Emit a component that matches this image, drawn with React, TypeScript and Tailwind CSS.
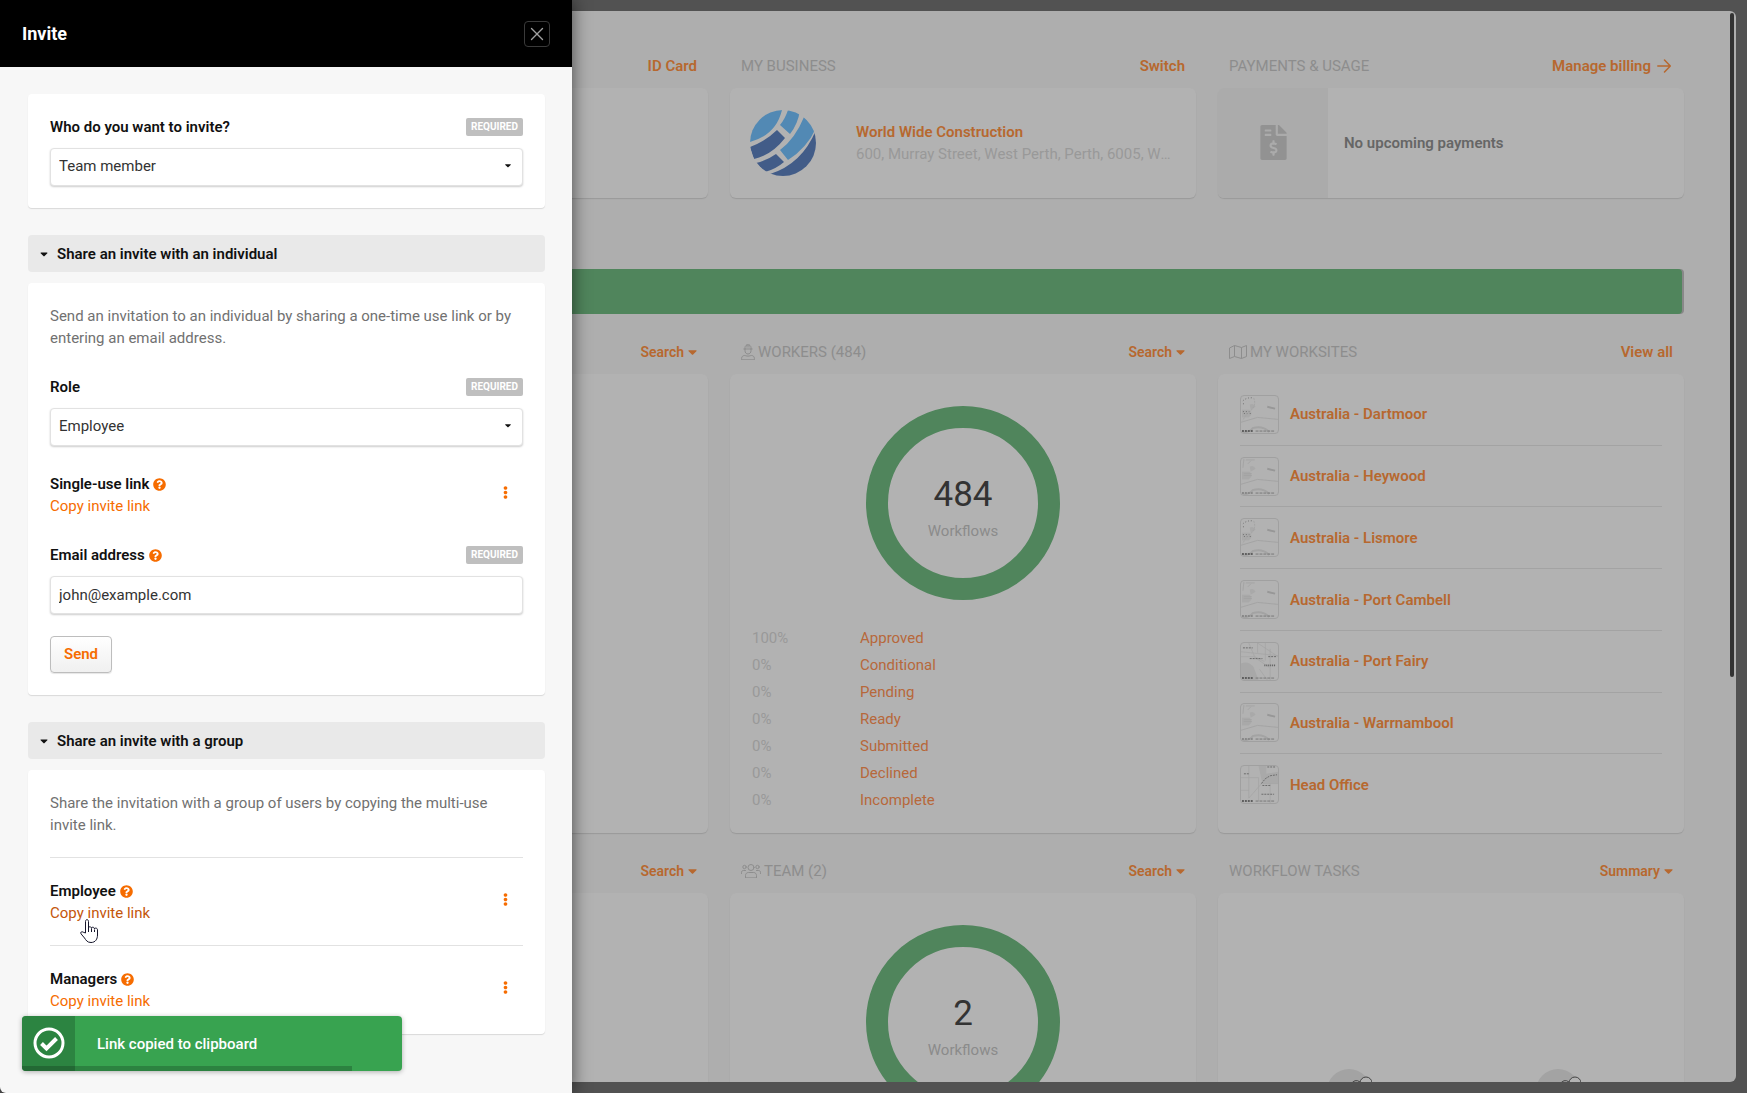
import type { ReactNode } from "react";
import { FaCaretDown, FaEllipsisV, FaFileInvoiceDollar, FaQuestionCircle } from "react-icons/fa";
import { X } from "lucide-react";
import clsx from "clsx";

type SectionProps = {
  icon?: ReactNode;
  title?: string;
  action: ReactNode;
  children?: ReactNode;
};

type FieldProps = {
  id: string;
  label: string;
  help?: boolean;
  children: ReactNode;
};

type InviteRowProps = {
  label: string;
  hovered?: boolean;
};

type MapKind = "town" | "coast" | "city" | "office";

const statuses = [
  ["100%", "Approved"],
  ["0%", "Conditional"],
  ["0%", "Pending"],
  ["0%", "Ready"],
  ["0%", "Submitted"],
  ["0%", "Declined"],
  ["0%", "Incomplete"],
];

const worksites: { name: string; map: MapKind }[] = [
  { name: "Australia - Dartmoor", map: "town" },
  { name: "Australia - Heywood", map: "coast" },
  { name: "Australia - Lismore", map: "town" },
  { name: "Australia - Port Cambell", map: "coast" },
  { name: "Australia - Port Fairy", map: "city" },
  { name: "Australia - Warrnambool", map: "coast" },
  { name: "Head Office", map: "office" },
];

// Icons

function WorkerIcon() {
  return (
    <svg viewBox="0 0 14 16" className="h-4 w-[14px]" fill="none" stroke="currentColor" strokeLinecap="round" strokeLinejoin="round">
      <path d="M2.800 5h8.400M4 5V3.600C4 2 5.300.8 7 .8s3 1.200 3 2.800V5M6 .9v2.300M8 .9v2.300" />
      <path d="M4 5.200v1.600c0 1.800 1.300 3.200 3 3.200s3-1.400 3-3.200V5.200" />
      <path d="M.6 15.400v-1c0-1.700 1.300-2.900 3-2.900.8 0 1.700.6 3.400.6s2.600-.6 3.400-.6c1.700 0 3 1.200 3 2.900v1z" />
    </svg>
  );
}

function TeamIcon() {
  return (
    <svg viewBox="0 0 20 14" className="h-[14px] w-5" fill="none" stroke="currentColor" strokeLinecap="round" strokeLinejoin="round">
      <circle cx="10" cy="3.500" r="3" />
      <circle cx="3.500" cy="3" r="1.700" />
      <circle cx="16.500" cy="3" r="1.700" />
      <path d="M4.500 13.500v-2c0-1.700 1.200-3 2.800-3h5.400c1.600 0 2.800 1.300 2.800 3v2zM.5 9.500V8.300c0-1 .8-1.800 1.800-1.800h2.200M19.500 9.500V8.300c0-1-.8-1.800-1.800-1.800h-2.200" />
    </svg>
  );
}

function WorksitesIcon() {
  return (
    <svg viewBox="0 0 18 14" className="h-[14px] w-[18px]" fill="none" stroke="currentColor" strokeLinejoin="round">
      <path d="M.5 3v10.500l5-2 7 2 5-2V.5l-5 2-7-2zM5.500.5v11M12.500 2.500v11" />
    </svg>
  );
}

function ArrowIcon() {
  return (
    <svg viewBox="0 0 14 14" className="mr-0.5 size-[14px]" fill="none" stroke="currentColor" strokeWidth="1.500" strokeLinecap="round" strokeLinejoin="round">
      <path d="M.8 7h12.400M7.500 1l5.800 6-5.800 6" />
    </svg>
  );
}

function GlobeLogo() {
  return (
    <svg viewBox="0 0 66 66" className="size-[66px]" aria-hidden="true">
      <clipPath id="globe">
        <circle cx="33" cy="33" r="33" />
      </clipPath>
      <g clipPath="url(#globe)">
        <path fill="#5289b4" d="M0 0h32Q26 25 0 32zM38 0h12Q48 14 40 24L30 15Q35 9 38 0z" />
        <path fill="#5289b4" d="M54 7L66 18Q57 38 38 50L30 40Q45 29 54 7z" />
        <path fill="#425c88" d="M27 20L35 28Q22 45 4 49L0 37Q16 31 27 20zM26 44L34 52Q26 59 15 62L6 53Q16 51 26 44z" />
        <path fill="#425c88" d="M66 20V66H20V64Q52 54 66 20z" />
      </g>
    </svg>
  );
}

function HandCursor() {
  return (
    <svg viewBox="0 0 18 24" className="h-6 w-[18px]" fill="#fff" stroke="#15152a" strokeLinejoin="round">
      <path d="M5.500 14V2.500c0-2.500 3-2.500 3 0V9c0-1.800 3-1.600 3 .3 0-1.600 3-1.400 3 .6 0-1.300 3-1 3 .8V16c0 4-2 7.500-6.500 7.500-4 0-5-2.500-6.500-4.500L1 14.800c-1-1.500.8-2.800 2.200-1.600z" />
      <path d="M8.500 9v4M11.500 9.500V13M14.500 10.500V13" />
    </svg>
  );
}

function SiteMap({ kind }: { kind: MapKind }) {
  return (
    <svg viewBox="0 0 38 38" className="size-full" fill="none" stroke="#a3a3a3" aria-hidden="true">
      {(kind === "town" || kind === "coast") && (
        <>
          <path fill="#a9a9a9" stroke="none" d="M9 9q4-2 6 2l-5 3zM1 14h8q4 4-1 8H1z" />
          <path d="M0 27l17-5 21 2" />
          <path d="M0 38q10-1 12-5 10-3 17 4" strokeWidth="2" />
          <path stroke="#979797" strokeWidth="2" d="M27 11l8 2" />
        </>
      )}
      {kind === "town" && (
        <>
          <path stroke="#6e6e6e" strokeDasharray="1 2" d="M2 5q4-4 11-3M2 8h3M2 16h9M3 18h8" />
          <path d="M13 2q3 8-3 13t-8 10" strokeDasharray="2 1" />
        </>
      )}
      {kind === "coast" && <path d="M2 10L3 1M5 2h9M7 6l3-3M3 16h8M3 18h8" />}
      {kind === "city" && (
        <>
          <path fill="#a8a8a8" stroke="none" d="M0 21q8-3 13 4l5 13H0z" />
          <path strokeWidth=".7" d="M0 14h13L29 25M8 0l6 14 10 5M17 0v10M25 0v18M17 0l21 14M0 9l38 4M30 6v32M19 27l8 11" />
          <path stroke="#6a6a6a" strokeDasharray="2 1" d="M2 5h10M9 16h13M28 14h8" />
          <path stroke="#5c5c5c" strokeWidth="2" strokeDasharray="1 1" d="M24 23h11" />
        </>
      )}
      {kind === "office" && (
        <>
          <path fill="#a9a9a9" stroke="none" d="M18 0h8v8l12-2v12H22z" />
          <path strokeWidth=".7" d="M8 0v33M0 12h18v24M8 33l14-16M22 18h16M30 18v20M0 25h8" />
          <path stroke="#6a6a6a" strokeDasharray="2 1" d="M21 18l4-5 5-3 7-1M3 8h6M27 1h9M22 20h9M21 29h13" />
        </>
      )}
      <path stroke={kind === "coast" ? "#888" : "#5f5f5f"} strokeWidth="2" strokeDasharray="2 1" d="M1 36h11" />
      <path stroke="#777" strokeDasharray="3 1" d="M15 36h20" />
    </svg>
  );
}

// Dashboard

function Section({ icon, title, action, children }: SectionProps) {
  return (
    <section className="flex min-w-0 flex-col">
      <div className="mb-[11px] flex h-[22px] items-center px-[11px]">
        {title && (
          <h2 className="flex items-center gap-[3px] uppercase text-[#8d8d8d]">
            {icon}
            <span>{title}</span>
          </h2>
        )}
        <div className="ml-auto font-semibold text-[#b7682f]">{action}</div>
      </div>
      <div className="flex flex-1 flex-col overflow-hidden rounded-md bg-[#b2b2b2] shadow-[0_1px_1px_rgba(0,0,0,0.12)]">
        {children}
      </div>
    </section>
  );
}

function MenuButton({ children }: { children: ReactNode }) {
  return (
    <button type="button" className="flex items-center gap-1 text-sm">
      {children}
      <FaCaretDown className="h-[14px] w-[9px]" />
    </button>
  );
}

function Donut({ count }: { count?: number }) {
  return (
    <div className="mx-auto mt-8 flex size-[194px] shrink-0 flex-col items-center rounded-full border-[22px] border-[#50855c] pt-[47px]">
      {count !== undefined && (
        <>
          <span className="text-[35px] leading-10 text-[#333]">{count}</span>
          <span className="mt-[5px] text-[#8b8b8b]">Workflows</span>
        </>
      )}
    </div>
  );
}

function StatusTable() {
  return (
    <table className="mx-[22px] mt-6 mb-5 text-left">
      <tbody>
        {statuses.map(([percent, label]) => (
          <tr key={label} className="h-[27px]">
            <td className="w-[108px] text-[#999]">{percent}</td>
            <td>
              <a href="#" className="text-[#b7683b]">
                {label}
              </a>
            </td>
          </tr>
        ))}
      </tbody>
    </table>
  );
}

function Worksites() {
  return (
    <ul className="flex flex-1 flex-col px-[22px] pt-[10px] pb-[18px]">
      {worksites.map(({ name, map }) => (
        <li
          key={name}
          className="flex flex-1 items-center gap-[11px] border-b border-[#a3a3a3] last:border-b-0"
        >
          <div className="size-[39px] overflow-hidden rounded-sm border border-[#a0a0a0]">
            <SiteMap kind={map} />
          </div>
          <a href="#" className="font-semibold text-[#b7682f]">
            {name}
          </a>
        </li>
      ))}
    </ul>
  );
}

function TaskBadge() {
  return (
    <svg viewBox="0 0 46 44" className="h-11 w-[46px]" fill="none" aria-hidden="true">
      <circle cx="23" cy="22" r="22" fill="#a3a3a3" />
      <circle cx="40" cy="14" r="6" fill="#b2b2b2" stroke="#444" />
      <path d="M24 16q5-7 10-3" stroke="#444" />
    </svg>
  );
}

function Dashboard() {
  return (
    <div className="flex h-full bg-[#525252] p-[11px]">
      <div className="w-[179px] shrink-0" />
      <main className="relative min-w-0 flex-1 overflow-hidden rounded-md bg-[#aeaeae] px-[52px] pt-11">
        <div className="grid grid-cols-3 gap-[22px]">
          <Section action={<a href="#">ID Card</a>} />
          <Section title="My business" action={<a href="#">Switch</a>}>
            <div className="flex h-[110px] items-center">
              <div className="flex w-[110px] shrink-0 justify-center pr-1">
                <GlobeLogo />
              </div>
              <div className="min-w-0 pr-6 pl-4">
                <a href="#" className="block font-semibold text-[#b7682f]">
                  World Wide Construction
                </a>
                <p className="truncate text-[#999]">
                  600, Murray Street, West Perth, Perth, 6005, Western Australia
                </p>
              </div>
            </div>
          </Section>
          <Section
            title="Payments & usage"
            action={
              <a href="#" className="flex items-center gap-1.5">
                Manage billing
                <ArrowIcon />
              </a>
            }
          >
            <div className="flex h-[110px] items-center">
              <div className="flex h-full w-[110px] items-center justify-center bg-[#ababab] pb-0.5 text-[#929292]">
                <FaFileInvoiceDollar className="size-[35px]" />
              </div>
              <p className="px-4 font-semibold text-[#666]">No upcoming payments</p>
            </div>
          </Section>
        </div>
        <div className="mt-[71px] flex h-[45px] overflow-hidden rounded-sm bg-[#888]">
          <div className="mr-0.5 flex-1 rounded-r-sm bg-[#50855c]" />
        </div>
        <div className="mt-[27px] grid grid-cols-3 gap-x-[22px] gap-y-[27px]">
          <Section action={<MenuButton>Search</MenuButton>}>
            <Donut />
          </Section>
          <Section
            icon={<WorkerIcon />}
            title="Workers (484)"
            action={<MenuButton>Search</MenuButton>}
          >
            <Donut count={484} />
            <StatusTable />
          </Section>
          <Section
            icon={<WorksitesIcon />}
            title="My worksites"
            action={<a href="#">View all</a>}
          >
            <Worksites />
          </Section>
          <Section action={<MenuButton>Search</MenuButton>} />
          <Section icon={<TeamIcon />} title="Team (2)" action={<MenuButton>Search</MenuButton>}>
            <Donut count={2} />
          </Section>
          <Section title="Workflow tasks" action={<MenuButton>Summary</MenuButton>}>
            <div className="grid h-[460px] grid-cols-2 justify-items-center pl-[26px] pr-[22px] pt-44">
              <TaskBadge />
              <TaskBadge />
            </div>
          </Section>
        </div>
        <div className="absolute top-0.5 right-0.5 h-[62%] w-1 rounded-full bg-[#333]" />
      </main>
    </div>
  );
}

// Invite drawer

function HelpIcon() {
  return <FaQuestionCircle className="size-[13px] text-[#f66c00]" />;
}

function Field({ id, label, help, children }: FieldProps) {
  return (
    <div>
      <div className="mb-[10px] flex items-center justify-between">
        <label htmlFor={id} className="flex items-center gap-1 font-semibold">
          {label}
          {help && <HelpIcon />}
        </label>
        <span className="rounded-xs bg-[#bfbfbf] px-[5px] text-[10px] leading-[18px] font-bold text-white">
          REQUIRED
        </span>
      </div>
      {children}
    </div>
  );
}

function Select({ id, options }: { id: string; options: string[] }) {
  return (
    <div className="relative">
      <select
        id={id}
        className="block h-[38px] w-full appearance-none rounded-sm border border-[#e2e2e2] bg-white px-2 pb-0.5 text-[#333] shadow-[0_1px_2px_rgba(0,0,0,0.2)]"
      >
        {options.map((option) => (
          <option key={option}>{option}</option>
        ))}
      </select>
      <FaCaretDown className="pointer-events-none absolute top-3 right-3 h-[11px] w-[6px]" />
    </div>
  );
}

function InviteRow({ label, hovered }: InviteRowProps) {
  return (
    <div className="flex items-center justify-between">
      <div>
        <p className="flex items-center gap-1 font-semibold">
          {label}
          <HelpIcon />
        </p>
        <button
          type="button"
          className={clsx("relative block", hovered ? "text-[#c4560a]" : "text-[#f66c00]")}
        >
          Copy invite link
          {hovered && (
            <span className="absolute top-[17px] left-[30px] z-10">
              <HandCursor />
            </span>
          )}
        </button>
      </div>
      <button
        type="button"
        aria-label={`${label} options`}
        className="px-[11px] pb-[5px] text-[#f66c00]"
      >
        <FaEllipsisV className="size-[13px]" />
      </button>
    </div>
  );
}

function Card({ children }: { children: ReactNode }) {
  return (
    <div className="rounded-sm bg-white p-[22px] shadow-[0_1px_1px_rgba(0,0,0,0.12)]">
      {children}
    </div>
  );
}

function Group({ title, children }: { title: string; children: ReactNode }) {
  return (
    <section className="mt-[27px]">
      <button
        type="button"
        className="mb-[11px] flex h-[37px] w-full items-center gap-[9px] rounded-sm bg-[#e9e9e9] px-3 font-semibold"
      >
        <FaCaretDown className="h-3 w-2" />
        {title}
      </button>
      <Card>{children}</Card>
    </section>
  );
}

function Toast() {
  return (
    <div
      role="status"
      className="absolute bottom-[22px] left-[22px] flex h-[55px] w-[380px] items-stretch overflow-hidden rounded-sm bg-[#38a350] text-white shadow-[0_1px_5px_rgba(0,0,0,0.3)]"
    >
      <div className="flex w-[53px] items-center justify-center bg-[#2c8441] pb-0.5">
        <svg viewBox="0 0 32 32" className="size-8" fill="none" stroke="currentColor">
          <circle cx="16" cy="16" r="14" strokeWidth="3" />
          <path d="M8.500 16.500l5 5 10-10" strokeWidth="4" />
        </svg>
      </div>
      <p className="self-center px-[22px] font-medium">Link copied to clipboard</p>
      <div className="absolute bottom-0 left-0 h-[5px] w-[330px] bg-black/20" />
    </div>
  );
}

function InviteDrawer() {
  return (
    <aside className="absolute inset-y-0 left-0 flex w-[572px] flex-col overflow-hidden rounded-bl-md bg-[#f7f7f7] shadow-[0_0_18px_rgba(0,0,0,0.6)]">
      <header className="flex h-[67px] shrink-0 items-center justify-between bg-black px-[22px] text-white">
        <h1 className="text-lg font-bold">Invite</h1>
        <button
          type="button"
          aria-label="Close"
          className="flex size-[26px] items-center justify-center rounded-sm border border-[#3a3a3a] text-[#a0a0a0]"
        >
          <X className="size-[22px] shrink-0" strokeWidth={1.5} />
        </button>
      </header>
      <div className="flex-1 overflow-hidden pt-[27px] pr-[27px] pl-7">
        <Card>
          <Field id="invitee" label="Who do you want to invite?">
            <Select id="invitee" options={["Team member"]} />
          </Field>
        </Card>
        <Group title="Share an invite with an individual">
          <p className="mb-[27px] text-[#717171]">
            Send an invitation to an individual by sharing a one-time use link or by entering an
            email address.
          </p>
          <Field id="role" label="Role">
            <Select id="role" options={["Employee", "Manager"]} />
          </Field>
          <div className="my-[27px]">
            <InviteRow label="Single-use link" />
          </div>
          <Field id="email" label="Email address" help>
            <input
              id="email"
              type="email"
              defaultValue="john@example.com"
              className="block h-[38px] w-full rounded-sm border border-[#e2e2e2] bg-white px-2 text-[#333] shadow-[0_1px_2px_rgba(0,0,0,0.2)]"
            />
          </Field>
          <button
            type="button"
            className="mt-[22px] block h-[37px] rounded-sm border border-[#bdbdbd] bg-linear-to-b from-white to-[#f0f0f0] px-[13px] pb-0.5 font-semibold text-[#f66c00] shadow-[0_1px_1px_rgba(0,0,0,0.1)]"
          >
            Send
          </button>
        </Group>
        <Group title="Share an invite with a group">
          <p className="mb-[21px] text-[#717171]">
            Share the invitation with a group of users by copying the multi-use invite link.
          </p>
          <div className="border-y border-[#e2e2e2] pt-[22px] pb-[21px]">
            <InviteRow label="Employee" hovered />
          </div>
          <div className="pt-[22px]">
            <InviteRow label="Managers" />
          </div>
        </Group>
      </div>
      <Toast />
    </aside>
  );
}

export default function App() {
  return (
    <div className="relative h-screen overflow-hidden bg-[#c4c4c4] font-[Roboto,sans-serif] text-[15px] leading-[22px] text-[#111]">
      <Dashboard />
      <InviteDrawer />
    </div>
  );
}
